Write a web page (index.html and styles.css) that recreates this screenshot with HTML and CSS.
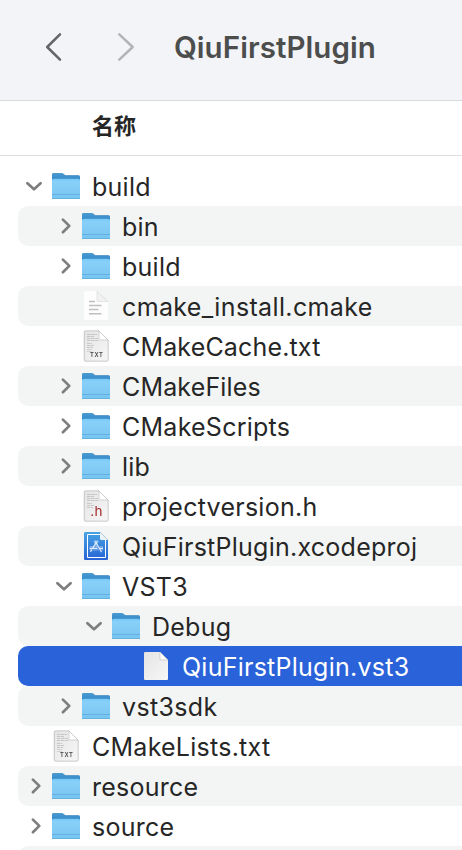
FILE: index.html
```
<!DOCTYPE html>
<html lang="zh-CN">
<head>
<meta charset="utf-8">
<title>QiuFirstPlugin</title>
<link rel="stylesheet" href="styles.css">
</head>
<body>
<svg class="defs" width="0" height="0" aria-hidden="true">
  <defs>
    <linearGradient id="front" x2="0" y2="1"><stop offset="0" stop-color="#78c6f5"/><stop offset=".15" stop-color="#88d0f9"/><stop offset="1" stop-color="#77c4f1"/></linearGradient>
    <linearGradient id="back" x2="0" y2="1"><stop offset="0" stop-color="#4b9bd2"/><stop offset=".25" stop-color="#368bc8"/><stop offset="1" stop-color="#368bc8"/></linearGradient>
    <linearGradient id="paper" x2="1" y2="1"><stop offset="0" stop-color="#e4e4e4"/><stop offset="1" stop-color="#f7f7f7"/></linearGradient>
    <linearGradient id="blue" x2="0" y2="1"><stop offset="0" stop-color="#46a4e3"/><stop offset="1" stop-color="#2762d5"/></linearGradient>
    <symbol id="right" viewBox="0 0 16 20"><path class="arrow" d="M4.9 3.6 11.3 9.900 4.900 16.200"/></symbol>
    <symbol id="down" viewBox="0 0 18 20"><path class="arrow" d="M2.400 7.200 9 13.300 15.600 7.200"/></symbol>
    <symbol id="folder" viewBox="0 0 30 32">
      <path fill="url(#back)" d="M1 4.500Q1 3 2.500 3h7.800q1 0 1.700.6l1.600 1.200q.7.500 1.700.5h12.100q1.600 0 1.600 1.600V27H1z"/>
      <path fill="url(#front)" d="M1 10.200q0-1.500 1.500-1.500h25q1.500 0 1.500 1.500v17.300q0 1.500-1.500 1.500h-25Q1 29 1 27.500z"/>
      <path fill="#5da9dc" d="M1 24.300h28v.7H1zM1.200 28.200h27.600q-.3.900-1.300.9h-25q-1 0-1.300-.9z"/>
    </symbol>
    <symbol id="plain" viewBox="0 0 30 32">
      <path fill="#fdfdfd" d="M4 1h12l11 11v17q0 1-1 1H4q-1 0-1-1V2q0-1 1-1z"/>
      <path fill="#f1f1f1" stroke="#d9d9d9" stroke-width=".6" d="M16 1.200v9.300q0 1 1 1h9.800z"/>
      <path stroke="#bfc0bf" stroke-width="1.400" d="M8 11.500h6M8 15.500h12.500M8 19.500h9.500M8 23.700h12.500"/>
    </symbol>
    <symbol id="sheet" viewBox="0 0 30 32">
      <path fill="url(#paper)" stroke="#c5c5c5" stroke-width=".6" d="M4.300 1H18l9 9v20q0 1-1 1H4.300q-1 0-1-1V2q0-1 1-1z"/>
      <path fill="#fff" stroke="#b9b9b9" stroke-width=".6" d="M18 1v8q0 1 1 1h8z"/>
      <path stroke="#999" stroke-width=".8" stroke-dasharray="3 .6 4 .5" opacity=".55" d="M6 4.500h10M6 6.500h7M6 8.500h11M6 10.500h12M6 13.500h5M6 15.500h7M6 17.500h6"/>
    </symbol>
    <symbol id="txt" viewBox="0 0 30 32"><use href="#sheet"/><path stroke="#aaa" stroke-width=".8" opacity=".5" d="M6 19.500h5M6 21.500h5"/><text x="15.700" y="26.900" class="txt-label">TXT</text></symbol>
    <symbol id="header" viewBox="0 0 30 32"><use href="#sheet"/><text x="15.500" y="26" class="h-label">.h</text></symbol>
    <symbol id="blank" viewBox="0 0 30 32">
      <path fill="url(#paper)" d="M4 2h15l8 8v19q0 1-1 1H4q-1 0-1-1V3q0-1 1-1z"/>
      <path fill="#fff" stroke="#bbb" stroke-width=".6" d="M19 2v7q0 1 1 1h7z"/>
    </symbol>
    <symbol id="xcode" viewBox="0 0 30 32">
      <path fill="url(#blue)" d="M4.500 2H19l8 8v18.500q0 1.500-1.500 1.500h-21Q3 30 3 28.500v-25Q3 2 4.500 2z"/>
      <path fill="none" stroke="#fff" stroke-width="1" d="M19 4.500H6.500v23h18V10"/>
      <path fill="#e9f2f5" d="M19 2v6.500q0 1.500 1.500 1.500H27z"/>
      <path fill="none" stroke="#e2effd" stroke-width="1.200" stroke-linecap="round" d="m14 11 6.300 10.700M16.300 11l-4.800 7.300M9.300 18.300h6.500M18.800 18.300h2.700M10.500 20l-.8 1.500"/>
      <path fill="none" stroke="#e2effd" stroke-width=".6" opacity=".8" d="M15.800 16.700H9v3.300h7.500M18.500 16.700h3V20h-1.500M12.800 11.500l4.900 9M17.400 11.500l-2.200 3.300"/>
    </symbol>
  </defs>
</svg>
<main class="finder">
  <header class="toolbar">
    <svg class="nav" viewBox="0 0 24 36"><path d="M17 5.300 4.200 18 17 30.700"/></svg>
    <svg class="nav forward" viewBox="0 0 24 36"><path d="M4.300 5.300 17.700 18 4.300 30.700"/></svg>
    <h1>QiuFirstPlugin</h1>
  </header>
  <div class="columns">名称</div>
  <div class="tree">
    <div class="row"><svg class="toggle down"><use href="#down"/></svg><svg class="icon folder"><use href="#folder"/></svg><span>build</span></div>
    <div class="row l1"><svg class="toggle"><use href="#right"/></svg><svg class="icon folder"><use href="#folder"/></svg><span>bin</span></div>
    <div class="row l1"><svg class="toggle"><use href="#right"/></svg><svg class="icon folder"><use href="#folder"/></svg><span>build</span></div>
    <div class="row l1"><i class="toggle"></i><svg class="icon page"><use href="#plain"/></svg><span class="wide">cmake_install.cmake</span></div>
    <div class="row l1"><i class="toggle"></i><svg class="icon"><use href="#txt"/></svg><span class="tight">CMakeCache.txt</span></div>
    <div class="row l1"><svg class="toggle"><use href="#right"/></svg><svg class="icon folder"><use href="#folder"/></svg><span class="tight">CMakeFiles</span></div>
    <div class="row l1"><svg class="toggle"><use href="#right"/></svg><svg class="icon folder"><use href="#folder"/></svg><span>CMakeScripts</span></div>
    <div class="row l1"><svg class="toggle"><use href="#right"/></svg><svg class="icon folder"><use href="#folder"/></svg><span>lib</span></div>
    <div class="row l1"><i class="toggle"></i><svg class="icon"><use href="#header"/></svg><span>projectversion.h</span></div>
    <div class="row l1"><i class="toggle"></i><svg class="icon"><use href="#xcode"/></svg><span>QiuFirstPlugin.xcodeproj</span></div>
    <div class="row l1"><svg class="toggle down"><use href="#down"/></svg><svg class="icon folder"><use href="#folder"/></svg><span>VST3</span></div>
    <div class="row l2"><svg class="toggle down"><use href="#down"/></svg><svg class="icon folder"><use href="#folder"/></svg><span>Debug</span></div>
    <div class="row l3 selected"><i class="toggle"></i><svg class="icon"><use href="#blank"/></svg><span>QiuFirstPlugin.vst3</span></div>
    <div class="row l1"><svg class="toggle"><use href="#right"/></svg><svg class="icon folder"><use href="#folder"/></svg><span class="wide">vst3sdk</span></div>
    <div class="row"><i class="toggle"></i><svg class="icon"><use href="#txt"/></svg><span>CMakeLists.txt</span></div>
    <div class="row"><svg class="toggle"><use href="#right"/></svg><svg class="icon folder"><use href="#folder"/></svg><span>resource</span></div>
    <div class="row"><svg class="toggle"><use href="#right"/></svg><svg class="icon folder"><use href="#folder"/></svg><span>source</span></div>
    <div class="row"></div>
  </div>
</main>
</body>
</html>
```
FILE: styles.css
```
* { box-sizing: border-box; }
body { margin: 0; background: #fff; font-family: Inter, "Noto Sans CJK SC", sans-serif; }
.defs { display: block; }
.finder { width: 462px; height: 850px; overflow: hidden; }
.toolbar { display: flex; align-items: center; height: 101px; padding: 0 0 6px 43px; background: #f3f4f7; border-bottom: 1px solid #d8dadc; }
.nav { width: 24px; height: 36px; fill: none; stroke: #646567; stroke-width: 2.5; stroke-linecap: round; stroke-linejoin: round; }
.forward { margin-left: 48px; stroke: #b3b4b6; }
h1 { margin: 0 0 0 35px; padding-bottom: 1px; font-size: 29.5px; font-weight: 600; line-height: 40px; letter-spacing: .05px; color: #4c4d4d; }
.columns { height: 55px; padding: 7px 0 0 92px; border-bottom: 1px solid #dedfdf; font-family: "Noto Sans CJK SC", sans-serif; font-size: 22px; font-weight: 700; line-height: 32px; color: #262626; }
.tree { padding: 10px 0 0 18px; }
.row { display: flex; align-items: center; height: 40px; border-radius: 10px 0 0 10px; font-size: 25px; line-height: 38px; letter-spacing: .25px; color: #262626; white-space: nowrap; }
.row span { padding-top: 2px; }
.row .tight { letter-spacing: .16px; }
.row .wide { letter-spacing: .36px; }
.row:nth-child(even) { background: #f3f5f4; }
.l1 { padding-left: 30px; }
.l2 { padding-left: 60px; }
.l3 { padding-left: 90px; }
.row.selected { background: #2962d9; color: #fff; }
.toggle { flex: none; width: 16px; height: 20px; margin: 0 7px 0 10px; }
.toggle.down { width: 18px; margin: 0 8px 0 7px; }
.arrow { fill: none; stroke: #7d7e7e; stroke-width: 2.7; stroke-linecap: round; stroke-linejoin: round; }
.icon { flex: none; width: 30px; height: 32px; margin-right: 11px; filter: drop-shadow(0 .5px .6px rgb(0 0 0 / .35)); }
.icon.page { filter: drop-shadow(0 .5px .6px rgb(0 0 0 / .15)); }
.txt-label { font: 600 5.8px Inter, sans-serif; letter-spacing: .6px; text-anchor: middle; fill: #444; }
.h-label { font: 400 13.5px Inter, sans-serif; text-anchor: middle; fill: #a32929; }
```
